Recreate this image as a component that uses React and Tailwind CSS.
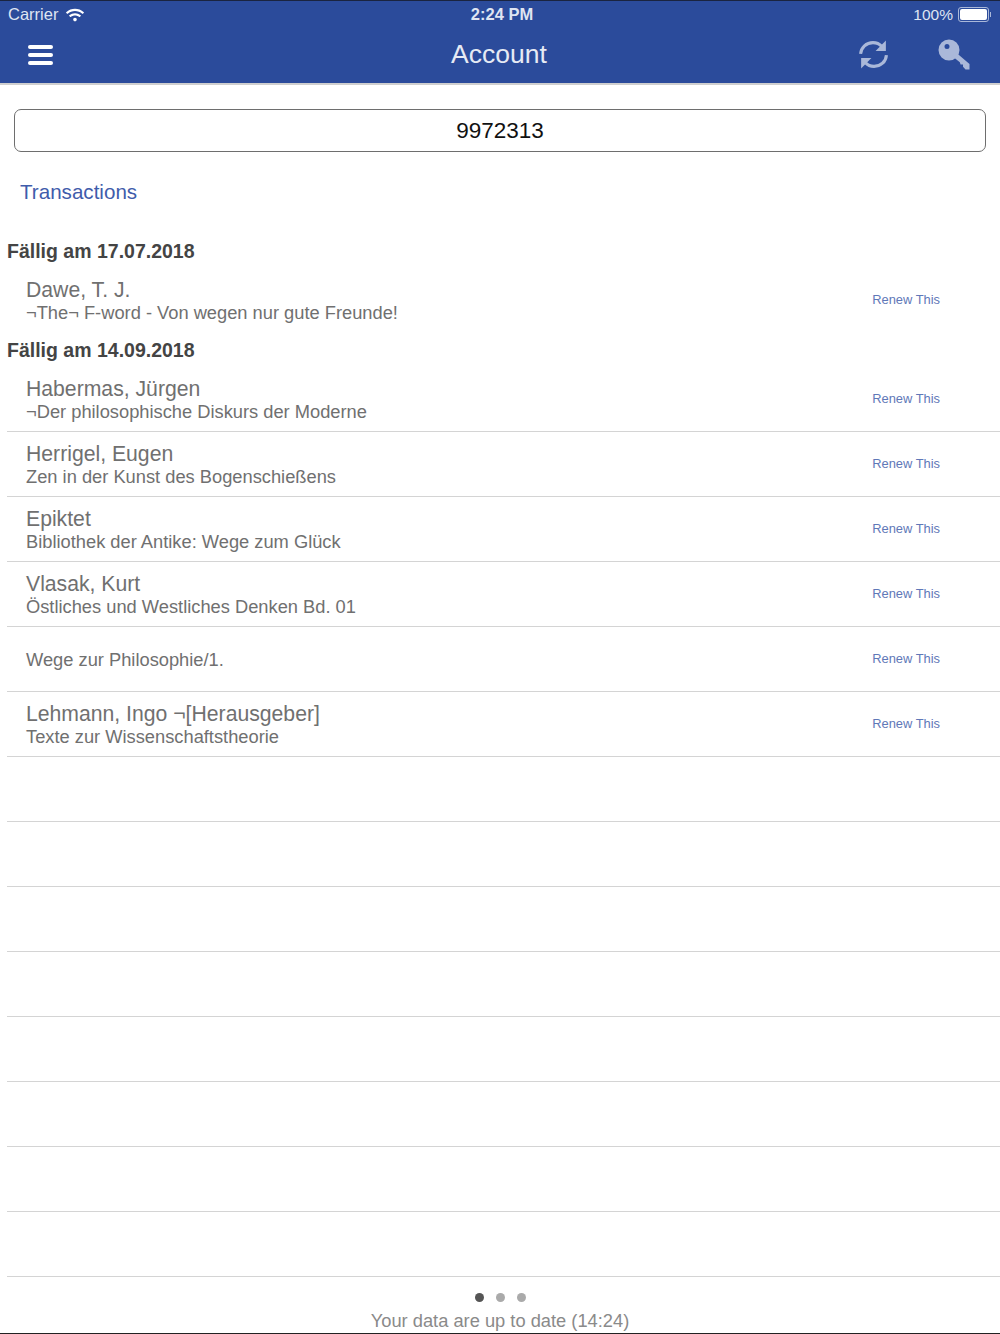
import React from 'react';
import { FaWifi } from 'react-icons/fa';

const dueGroups = [
  {
    label: 'Fällig am 17.07.2018',
    items: [{ author: 'Dawe, T. J.', title: '¬The¬ F-word - Von wegen nur gute Freunde!' }],
  },
  {
    label: 'Fällig am 14.09.2018',
    items: [
      { author: 'Habermas, Jürgen', title: '¬Der philosophische Diskurs der Moderne' },
      { author: 'Herrigel, Eugen', title: 'Zen in der Kunst des Bogenschießens' },
      { author: 'Epiktet', title: 'Bibliothek der Antike: Wege zum Glück' },
      { author: 'Vlasak, Kurt', title: 'Östliches und Westliches Denken Bd. 01' },
      { author: '', title: 'Wege zur Philosophie/1.' },
      { author: 'Lehmann, Ingo ¬[Herausgeber]', title: 'Texte zur Wissenschaftstheorie' },
    ],
  },
];

const emptyRows = [0, 1, 2, 3, 4, 5, 6, 7];

const KeyIcon = () => (
  <svg viewBox="0 0 32 32" className="w-[32px] h-[32px]" fill="#aab8d9">
    <path
      fillRule="evenodd"
      d="M11 .5a10.5 10.5 0 1 1 0 21 10.5 10.5 0 0 1 0-21zM9 5a2.5 2.5 0 1 0 0 5 2.5 2.5 0 0 0 0-5z"
    />
    <path d="M18 13.5L31.5 25v5.5h-4l-2.5-2.8v-2.2h-2.4l-.8-2.2-8-6.5z" />
  </svg>
);

const RefreshIcon = () => (
  <svg viewBox="0 0 30 30" className="w-[31px] h-[31px]" fill="none">
    <path d="M2.5 14.5C3 8 8 3.5 14.5 3.5c3.6 0 6.4 1.4 8.4 3.6" stroke="#aab8d9" strokeWidth="3" />
    <path d="M27 1.5V11.5H17z" fill="#aab8d9" />
    <path d="M27.5 15.5C27 22 22 26.5 15.5 26.5c-3.6 0-6.4-1.4-8.4-3.6" stroke="#aab8d9" strokeWidth="3" />
    <path d="M3 28.5V18.5H13z" fill="#aab8d9" />
  </svg>
);

const BookRow = ({ author, title, last }) => (
  <div className={`ml-[7px] h-[65px] flex items-center justify-between border-b ${last ? 'border-transparent' : 'border-[#d4d4d4]'}`}>
    <div className="pl-[19px] pt-[1px]">
      {author && <div className="text-[21.2px] leading-[24px] text-[#707070]">{author}</div>}
      <div className="text-[18.3px] leading-[22px] text-[#707070]">{title}</div>
    </div>
    <span className="mr-[60px] text-[12.9px] text-[#5f78b8]">Renew This</span>
  </div>
);

export default function App() {
  return (
    <div className="w-[1000px] h-[1334px] bg-white flex flex-col font-['Liberation_Sans',Arial,sans-serif] overflow-hidden border-b border-[#222]">
      {/* blue top bar with status line */}
      <div className="bg-[#2b4b9b] h-[85px] shrink-0 border-t border-[#1a2440] border-b-[2px] border-b-[#cfcfcf] text-white">
        <div className="h-[27px] grid grid-cols-3 items-center pl-[8px] pr-[9px] text-[#dfe5f2]">
          <div className="flex items-center gap-[8px] text-[16.5px]">
            <span>Carrier</span>
            <FaWifi className="w-[18px] h-[18px] text-white" />
          </div>
          <span className="font-bold text-[16.5px] text-center pl-[5px]">2:24 PM</span>
          <div className="flex items-center justify-end gap-[5px] text-[15.5px]">
            <span>100%</span>
            <div className="flex items-center">
              <div className="w-[31px] h-[15px] rounded-[3px] border border-[#aab8d9] p-[1px]">
                <div className="w-full h-full rounded-[2px] bg-white" />
              </div>
              <div className="w-[1px] h-[5px] bg-[#aab8d9] ml-[1px]" />
            </div>
          </div>
        </div>
        <div className="h-[53px] grid grid-cols-3 items-center pl-[28px] pr-[30px]">
          <div className="w-[25px] flex flex-col gap-[4px]">
            <div className="h-[4px] rounded-full bg-white" />
            <div className="h-[4px] rounded-full bg-white" />
            <div className="h-[4px] rounded-full bg-white" />
          </div>
          <div className="text-[26.5px] text-[#e6eaf4] text-center">Account</div>
          <div className="flex items-center justify-end gap-[49px]">
            <RefreshIcon />
            <KeyIcon />
          </div>
        </div>
      </div>

      {/* account number */}
      <div className="px-[14px] pt-[24px] shrink-0">
        <div className="h-[43px] rounded-[7px] border border-[#6e6e6e] flex items-center justify-center text-[22.5px] text-[#111]">
          9972313
        </div>
      </div>

      <div className="pl-[20px] pt-[26px] h-[83px] text-[20.6px] leading-[27px] text-[#3f5cab] shrink-0">Transactions</div>

      {dueGroups.map((group, groupIndex) => (
        <div key={group.label}>
          <div className={`pl-[7px] font-bold text-[19.5px] text-[#444] flex items-center ${groupIndex === 0 ? 'h-[33px] pt-[1px]' : 'h-[34px] pt-[2px]'}`}>
            {group.label}
          </div>
          {group.items.map((item, i) => (
            <BookRow key={item.title} author={item.author} title={item.title} last={groupIndex === 0 && i === 0} />
          ))}
        </div>
      ))}

      {emptyRows.map((row) => (
        <div key={row} className="ml-[7px] h-[65px] shrink-0 border-b border-[#d4d4d4]" />
      ))}

      {/* footer with page dots */}
      <div className="flex-1 flex flex-col items-center pt-[16px]">
        <div className="flex items-center gap-[12px]">
          <div className="w-[9px] h-[9px] rounded-full bg-[#555]" />
          <div className="w-[9px] h-[9px] rounded-full bg-[#aaa]" />
          <div className="w-[9px] h-[9px] rounded-full bg-[#aaa]" />
        </div>
        <div className="text-[18.3px] leading-[22px] text-[#8a8a8a] mt-[8px]">Your data are up to date (14:24)</div>
      </div>
    </div>
  );
}
